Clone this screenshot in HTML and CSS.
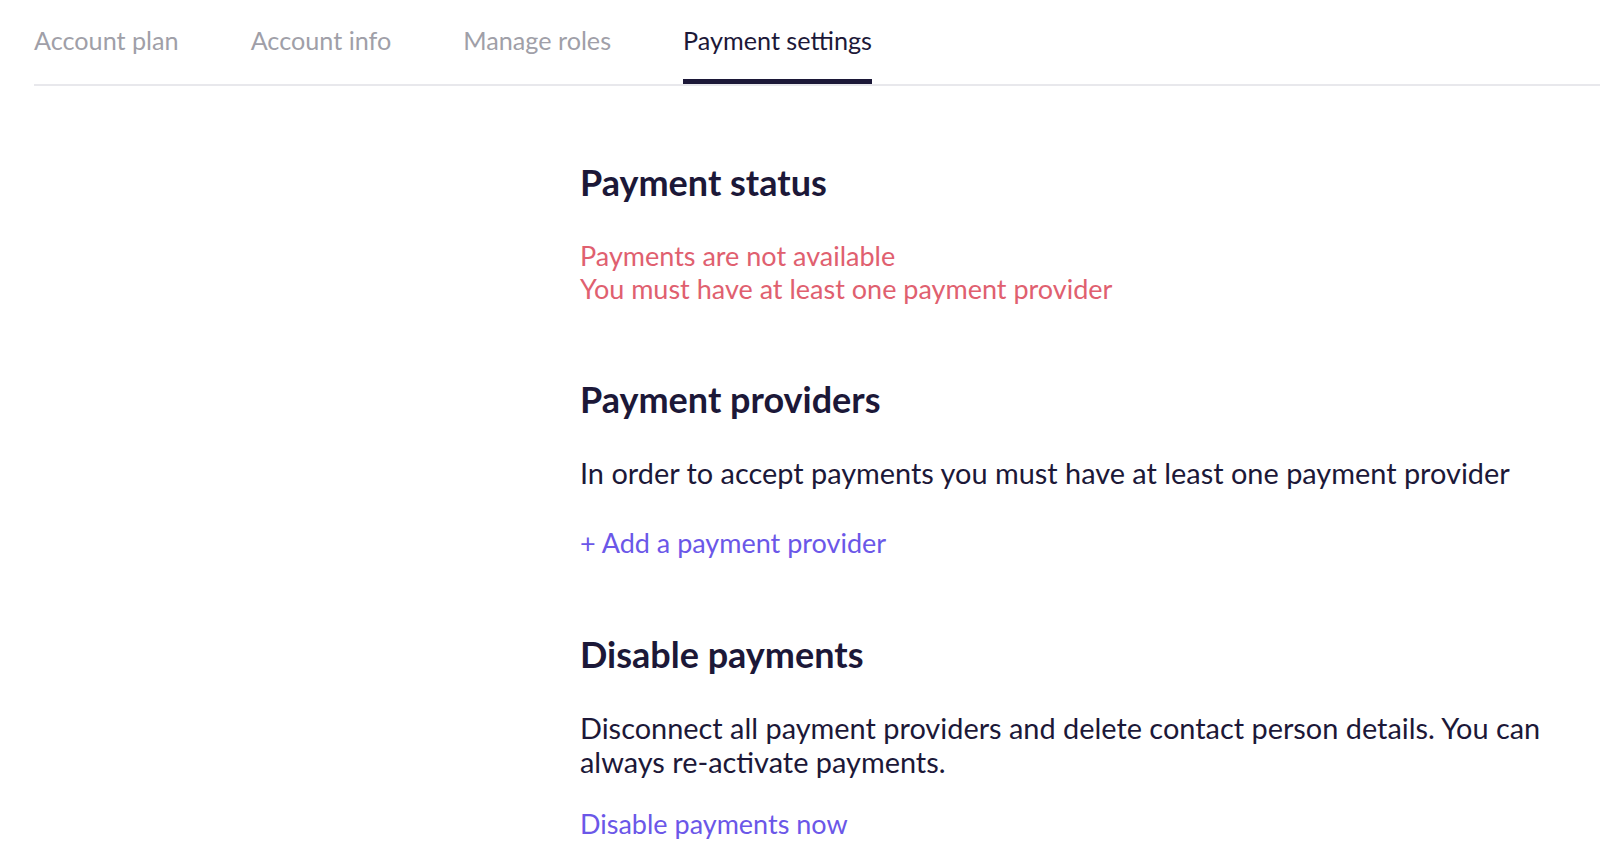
FILE: index.html
```html
<!DOCTYPE html>
<html lang="en">
<head>
<meta charset="UTF-8">
<meta name="viewport" content="width=device-width, initial-scale=1.0">
<title>Payment settings</title>
<link rel="stylesheet" href="styles.css">
</head>
<body>

<nav class="tabs">
  <a href="#" class="tab">Account plan</a>
  <a href="#" class="tab">Account info</a>
  <a href="#" class="tab">Manage roles</a>
  <a href="#" class="tab active">Payment settings</a>
</nav>

<main class="content">
  <section class="block">
    <h2>Payment status</h2>
    <p class="error">Payments are not available<br>You must have at least one payment provider</p>
  </section>

  <section class="block">
    <h2>Payment providers</h2>
    <p>In order to accept payments you must have at least one payment provider</p>
    <a href="#" class="link">+ Add a payment provider</a>
  </section>

  <section class="block last">
    <h2>Disable payments</h2>
    <p class="tight">Disconnect all payment providers and delete contact person details. You can always re-activate payments.</p>
    <a href="#" class="link">Disable payments now</a>
  </section>
</main>

</body>
</html>
```

FILE: styles.css
```css
body {
  font-family: Lato, "Open Sans", sans-serif;
  background-color: #fff;
  color: #1c1838;
  margin: 0;
  padding: 0;
}

.tabs {
  display: flex;
  gap: 72px;
  margin-left: 34px;
  border-bottom: 2px solid #e8e8ec;
}

.tab {
  display: block;
  padding: 25px 0 24px;
  font-size: 25.2px;
  line-height: 30px;
  color: #a09fa8;
  text-decoration: none;
  border-bottom: 5px solid transparent;
}

.tab.active {
  color: #1c1838;
  border-bottom-color: #1c1838;
}

.content {
  margin-left: 580px;
  padding-top: 74px;
  max-width: 1000px;
}

.block {
  margin-bottom: 72px;
}

.block.last {
  margin-bottom: 0;
}

h2 {
  font-size: 36px;
  font-weight: bold;
  margin: 0 0 35px;
  line-height: 44px;
}

p {
  font-size: 28.9px;
  line-height: 34px;
  margin: 0 0 36px;
}

p.tight {
  margin-bottom: 28px;
}

.error {
  font-size: 27px;
  line-height: 33px;
  color: #e0606f;
  margin: 0;
}

.link {
  display: block;
  font-size: 27px;
  line-height: 34px;
  color: #6b57e8;
  text-decoration: none;
}
```
